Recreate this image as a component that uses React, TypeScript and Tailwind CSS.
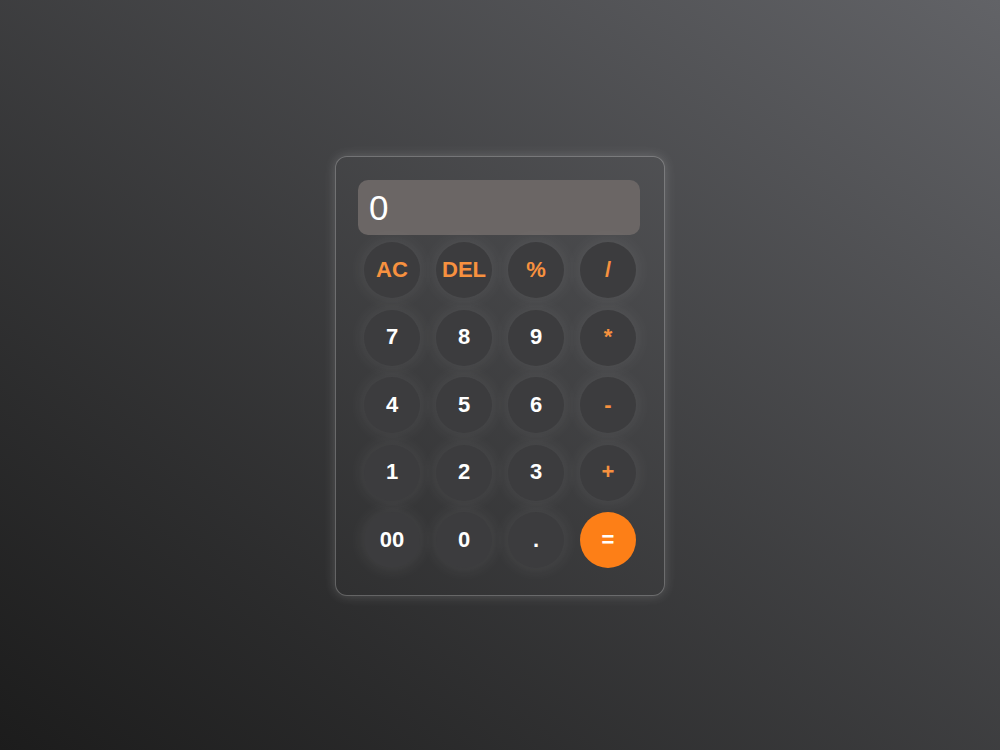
import React from "react";

const keys: { label: string; kind: "op" | "num" | "eq" }[] = [
  { label: "AC", kind: "op" },
  { label: "DEL", kind: "op" },
  { label: "%", kind: "op" },
  { label: "/", kind: "op" },
  { label: "7", kind: "num" },
  { label: "8", kind: "num" },
  { label: "9", kind: "num" },
  { label: "*", kind: "op" },
  { label: "4", kind: "num" },
  { label: "5", kind: "num" },
  { label: "6", kind: "num" },
  { label: "-", kind: "op" },
  { label: "1", kind: "num" },
  { label: "2", kind: "num" },
  { label: "3", kind: "num" },
  { label: "+", kind: "op" },
  { label: "00", kind: "num" },
  { label: "0", kind: "num" },
  { label: ".", kind: "num" },
  { label: "=", kind: "eq" },
];

export default function App() {
  return (
    <div
      className="w-[1000px] h-[750px] flex items-center justify-center bg-gradient-to-tr from-[#1c1c1c] to-[#626367]"
      style={{ fontFamily: '"Liberation Sans", Arial, sans-serif' }}
    >
      <div className="w-[330px] h-[440px] mt-[2px] rounded-[12px] border border-white/25 bg-white/[0.01] pl-[22px] pr-[24px] pt-[23px] shadow-[0_0_12px_rgba(255,255,255,0.18)]">
        <div className="h-[55px] rounded-[10px] bg-[#6b6665] flex items-center px-[11px] text-white text-[35px] leading-none">
          0
        </div>
        <div className="mt-[7px] grid grid-cols-[repeat(4,56px)] justify-start gap-x-[16px] gap-y-[11.5px] pl-[6px]">
          {keys.map((k) => (
            <button
              key={k.label}
              className={
                k.kind === "eq"
                  ? "w-[56px] h-[56px] pb-[2px] rounded-full bg-[#fd7f17] text-white text-[22px] font-bold flex items-center justify-center"
                  : k.kind === "op"
                  ? "w-[56px] h-[56px] pb-[2px] rounded-full bg-[#3c3c3e] text-[#f7913f] text-[22px] font-bold flex items-center justify-center shadow-[0_0_18px_rgba(255,255,255,0.1)]"
                  : "w-[56px] h-[56px] pb-[2px] rounded-full bg-[#3c3c3e] text-white text-[22px] font-bold flex items-center justify-center shadow-[0_0_18px_rgba(255,255,255,0.1)]"
              }
            >
              {k.label}
            </button>
          ))}
        </div>
      </div>
    </div>
  );
}
